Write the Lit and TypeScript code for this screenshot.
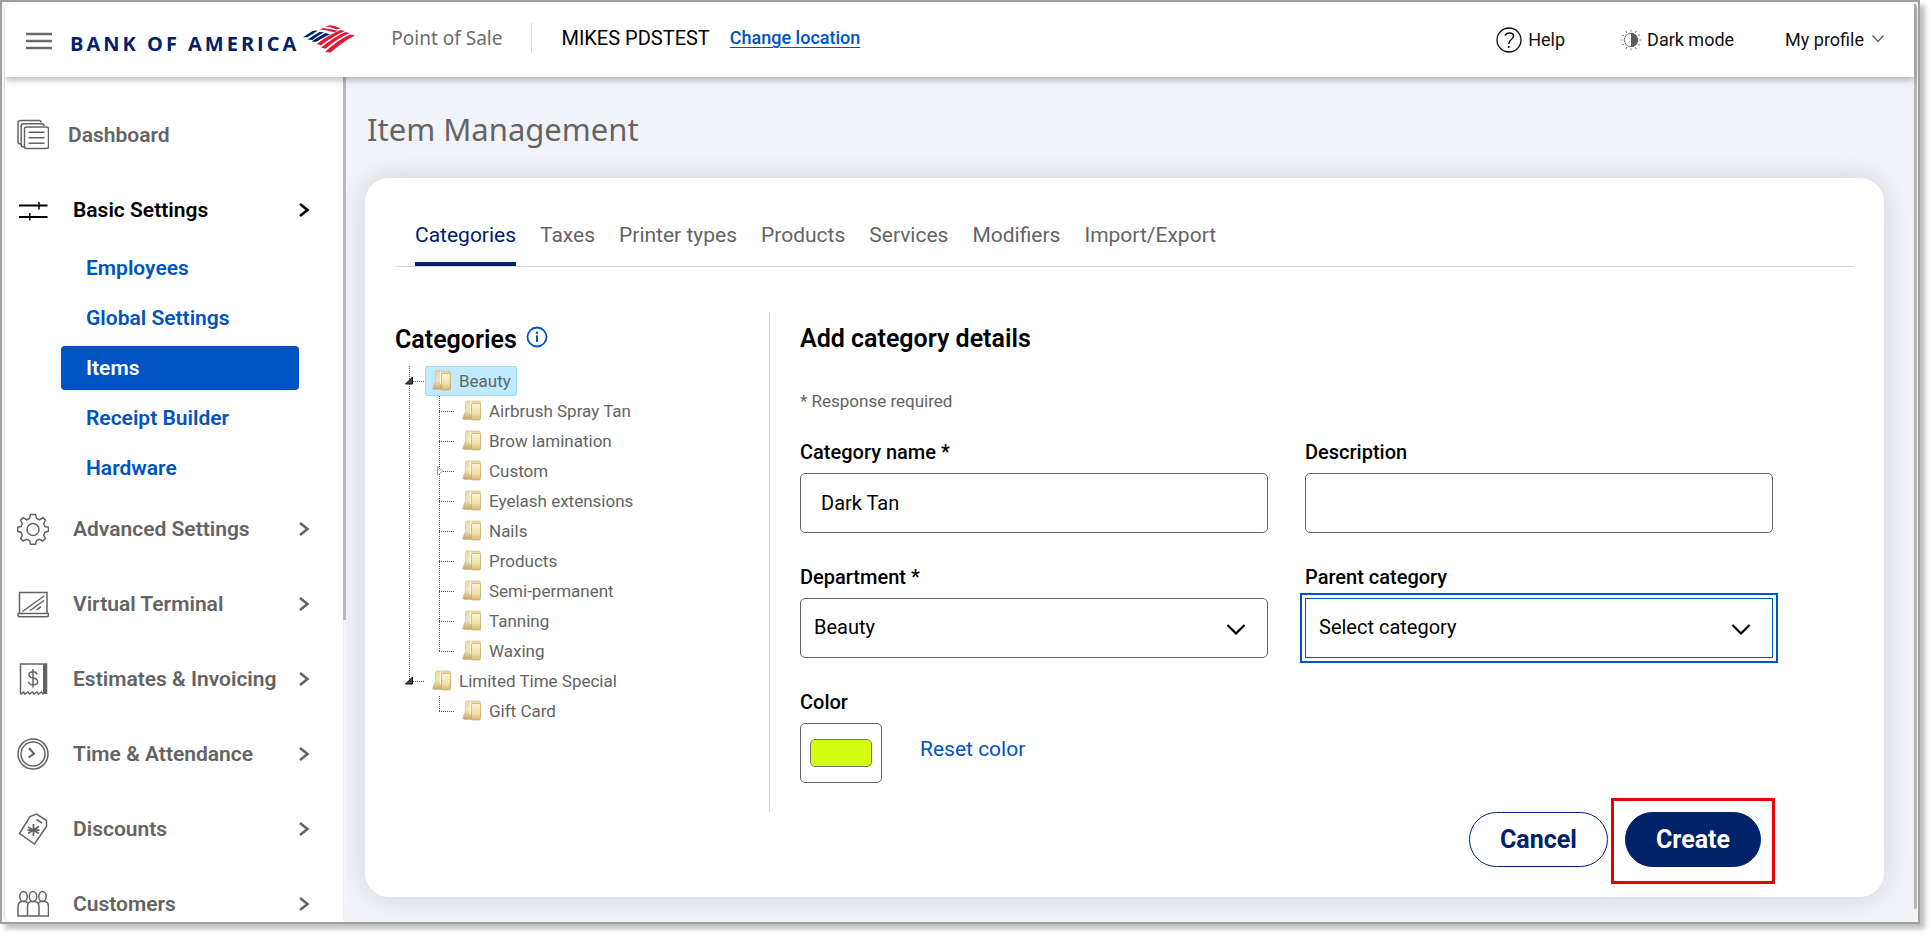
import { LitElement, html, svg, css } from "lit";
import { customElement, state } from "lit/decorators.js";
import { classMap } from "lit/directives/class-map.js";

interface TreeNode {
  name: string;
  selected?: boolean;
  toggle?: "open" | "closed";
  children?: TreeNode[];
}

const TREE: TreeNode[] = [
  {
    name: "Beauty",
    selected: true,
    toggle: "open",
    children: [
      { name: "Airbrush Spray Tan" },
      { name: "Brow lamination" },
      { name: "Custom", toggle: "closed" },
      { name: "Eyelash extensions" },
      { name: "Nails" },
      { name: "Products" },
      { name: "Semi-permanent" },
      { name: "Tanning" },
      { name: "Waxing" },
    ],
  },
  { name: "Limited Time Special", toggle: "open", children: [{ name: "Gift Card" }] },
];

const ICONS = {
  dashboard: svg`<path d="M5 25H3.500Q1 25 1 22.500V3.500Q1 1.500 3.500 1.500H22Q24 1.500 24 3.500M24 4.500"/><path d="M8 28H6.500Q4.200 28 4.200 25.500V7Q4.200 4.700 6.500 4.700H25Q27 4.700 27 7"/><rect x="7.500" y="8" width="24" height="21.500" rx="2"/><path d="M11.500 13.200H27.500M11.500 18.700H27.500M11.500 24.200H27.500"/>`,
  basic: svg`<path d="M2 11.500H30.500M2 23H30.500" stroke-width="2"/><path d="M22 8V15.500M12.800 19V26.500" stroke-width="1.500"/>`,
  advanced: svg`<path d="M13.500 1.500H18.500L19.500 5.500L22.500 6.800L26 4.500L28.500 7.200L26.700 10.500L28 13.500L31.500 14.200V18.300L28 19.200L26.700 22.300L28.500 25.500L25.700 28L22.500 26.300L19.500 27.500L18.500 31.200H13.500L12.500 27.500L9.500 26.300L6.300 28L3.500 25.500L5.300 22.300L4 19.200L.7 18.300V14.200L4 13.500L5.300 10.500L3.500 7.200L6.200 4.500L9.500 6.800L12.500 5.500Z"/><circle cx="16" cy="16.500" r="6"/>`,
  terminal: svg`<path d="M2.500 25V4.500H30V25"/><path d="M1 25.500H31.500V27Q31.500 28.800 29.500 28.800H3Q1 28.800 1 27Z"/><path d="M5.500 23.500L27 8M13 22.500L27 12.500M19.500 22L24 18.700"/>`,
  invoice: svg`<path d="M3.500 31V1H29.500V31"/><path d="M27.500 1V31" stroke-width="3"/><path d="M3.500 31.500L6.500 29L8 31L11 29L12.500 31L15.500 29L17 31L20 29L21.500 31L24.500 29L26 31L29 29"/><path d="M20.200 11.500Q19.500 8.700 16 8.700Q12 8.700 12 11.700Q12 14.200 16.200 15Q20.700 15.800 20.700 18.800Q20.700 21.800 16.200 21.800Q12.200 21.800 11.500 18.600M16 6V24.500"/>`,
  time: svg`<circle cx="16" cy="16" r="15"/><circle cx="16" cy="16" r="12"/><path d="M12 10L17 15.800L11.500 19.500" stroke-width="2"/>`,
  discounts: svg`<path d="M2.500 20.500L13 3.500L19.500 1L29.500 7.500V13.500L17.500 31Z"/><path d="M19.500 6.500L25 10"/><path d="M16.500 11V23M11 14L22 20.500M22 13.500L11 20.500M10.500 17.200H22.500" stroke-width="1.800"/>`,
  customers: svg`<ellipse cx="6.500" cy="8.500" rx="3.700" ry="5"/><ellipse cx="16" cy="8.500" rx="3.700" ry="5"/><ellipse cx="25.500" cy="8.500" rx="3.700" ry="5"/><path d="M10.500 28H1V19Q1 13.500 5 13.500H8Q9.500 13.500 10.500 15M22 28H10.500V19Q10.500 13.500 14.500 13.500H17.500Q22 13.500 22 19ZM22 28H31.500V19Q31.500 13.500 27.500 13.500H24.500Q22.500 13.500 21.800 15"/>`,
};

const NAV: { id: keyof typeof ICONS; label: string; sub?: string[] }[] = [
  { id: "dashboard", label: "Dashboard" },
  {
    id: "basic",
    label: "Basic Settings",
    sub: ["Employees", "Global Settings", "Items", "Receipt Builder", "Hardware"],
  },
  { id: "advanced", label: "Advanced Settings" },
  { id: "terminal", label: "Virtual Terminal" },
  { id: "invoice", label: "Estimates & Invoicing" },
  { id: "time", label: "Time & Attendance" },
  { id: "discounts", label: "Discounts" },
  { id: "customers", label: "Customers" },
];

@customElement("pos-header")
export class PosHeader extends LitElement {
  static styles = css`
    :host { display: block; position: relative; z-index: 2; }
    .bar {
      display: flex; align-items: center; height: 75px; box-sizing: border-box;
      padding: 0 30px 3px 21px; background: #fff; white-space: nowrap;
      font: 18px/24px Roboto, sans-serif; color: #111;
      box-shadow: 0 3px 7px rgba(0, 0, 0, 0.28);
    }
    button { font: inherit; color: inherit; background: none; border: 0; padding: 0; display: flex; align-items: center; cursor: pointer; }
    svg { display: block; flex: none; fill: none; }
    .menu { padding-top: 6px; }
    .logo { display: flex; align-items: center; margin-left: 18px; padding-top: 2px; gap: 4px; text-decoration: none; }
    .word { font: 700 20px/24px "Open Sans", sans-serif; letter-spacing: 3px; color: #012169; padding-top: 10px; }
    .product { font: 19px/24px "Noto Sans", sans-serif; color: #6d6d6d; margin-left: 36px; }
    .rule { width: 1px; height: 30px; background: #d8d8d8; margin: 0 29px; }
    .place { font-size: 20px; color: #000; }
    .change { font-weight: 500; color: #0053c2; margin-left: 20px; text-decoration: underline; text-underline-offset: 3px; }
    .right { margin-left: auto; display: flex; align-items: center; padding-top: 3px; }
    .help { gap: 6px; }
    .dark { gap: 5px; margin-left: 55px; }
    .profile { gap: 8px; margin-left: 51px; }
  `;

  render() {
    const rays = [0, 30, 60, 90, 120, 150, 180, 210, 240, 270, 300, 330];
    return html`
      <header class="bar">
        <button class="menu" aria-label="Menu">
          <svg width="26" height="20" viewBox="0 0 26 20" stroke="#6a6a6a" stroke-width="2.400"><path d="M0 3H26M0 10H26M0 17H26" /></svg>
        </button>
        <a class="logo" href="#" aria-label="Home">
          <span class="word">BANK OF AMERICA</span>
          <svg width="52" height="28" viewBox="0 0 52 28">
            <g fill="#012169">
              <path d="M0 12.200L10 5.800L15 5.500L4.500 12.200Z" /><path d="M4.500 14.500Q12 9.500 16.500 7L21 7.200Q15 10.500 9.500 15Z" /><path d="M8.500 16.500Q16 11.500 22.500 8L27 9.200Q20 12.500 13.500 16.800Z" />
            </g>
            <g fill="#e31837">
              <path d="M16 4.200L20.500 3Q28 4 35 5.800L31 7.300Q24 5 16 4.200Z" /><path d="M22.500 1.500L27 .3Q32 1 37.500 3.200L33.500 4.600Q28 2.200 22.500 1.500Z" />
              <path d="M13.500 19Q27 9 37.500 4.900L42 6Q31 10.500 18 20.300Z" /><path d="M18.200 22.400Q31 12 42.500 7L46.500 8.300Q35 13 22.500 23.800Z" /><path d="M22 27Q34 15.500 47 9.500L52 10.600Q41 16 27.500 27.500Z" />
            </g>
          </svg>
        </a>
        <span class="product">Point of Sale</span>
        <span class="rule"></span>
        <span class="place">MIKES PDSTEST</span>
        <a class="change" href="#">Change location</a>
        <div class="right">
          <button class="help">
            <svg width="26" height="26" viewBox="0 0 26 26" stroke="#111"><circle cx="13" cy="13" r="12" stroke-width="1.300" /><path d="M9 8.500Q10 6 13.500 6Q17.500 6 17.500 9Q17.500 11 15.300 12.500Q13 14 12.800 17" stroke-width="1.500" /><circle cx="12.700" cy="20" r="1" fill="#111" stroke="none" /></svg>
            Help
          </button>
          <button class="dark">
            <svg width="22" height="22" viewBox="0 0 22 22" stroke="#777">
              <circle cx="11" cy="11" r="6.700" stroke-width="1" /><path d="M11 4A7 7 0 0 1 11 18Z" fill="#5c5c5c" stroke="none" />
              ${rays.map((a) => svg`<path d="M11 .700V2.600" transform="rotate(${a} 11 11)" />`)}
            </svg>
            Dark mode
          </button>
          <button class="profile">
            My profile
            <svg width="12" height="12" viewBox="0 0 12 12" stroke="#666" stroke-width="1.500"><path d="M.5 1.500L6 7.500L11.500 1.500" /></svg>
          </button>
        </div>
      </header>
    `;
  }
}

@customElement("pos-sidebar")
export class PosSidebar extends LitElement {
  static styles = css`
    :host { display: flex; background: #fff; overflow: hidden; }
    nav { width: 338px; box-sizing: border-box; padding-top: 20px; font: 600 21px/24px Roboto, sans-serif; }
    ul { list-style: none; margin: 0; padding: 0; }
    a { text-decoration: none; color: inherit; }
    .item { display: flex; align-items: center; height: 75px; padding: 0 33px 0 12px; color: #646464; }
    .item svg { flex: none; fill: none; stroke: currentColor; stroke-width: 1.5; display: block; }
    .label { flex: 1; margin-left: 24px; white-space: nowrap; }
    .plain .label { margin-left: 19px; }
    .current { color: #000; }
    .sub { margin: -1px 44px 1px 56px; }
    .sub a { display: block; padding: 10px 25px; margin-bottom: 6px; border-radius: 4px; color: #0053c2; }
    .sub li:last-child a { margin: 0; }
    .sub .active { background: #0053c2; color: #fff; }
    .track { width: 3px; background: #f4f4f4; }
    .thumb { height: 543px; max-height: 65%; background: #b8b8b8; }
  `;

  render() {
    return html`
      <nav>
        <ul>
          ${NAV.map(
            (n) => html`<li>
              <a href="#" class=${classMap({ item: true, plain: n.id === "dashboard", current: !!n.sub })}>
                <svg width="32" height="32" viewBox="0 0 32 32">${ICONS[n.id]}</svg>
                <span class="label">${n.label}</span>
                ${n.id === "dashboard"
                  ? null
                  : html`<svg width="11" height="14" viewBox="0 0 11 14"><path d="M1 1L8.500 7L1 13" stroke-width="2.600" /></svg>`}
              </a>
              ${n.sub
                ? html`<ul class="sub">
                    ${n.sub.map((s) => html`<li><a href="#" class=${classMap({ active: s === "Items" })}>${s}</a></li>`)}
                  </ul>`
                : null}
            </li>`
          )}
        </ul>
      </nav>
      <div class="track"><div class="thumb"></div></div>
    `;
  }
}

@customElement("category-tree")
export class CategoryTree extends LitElement {
  static styles = css`
    :host { display: block; font: 17px/20px Roboto, sans-serif; color: #646464; }
    ul { list-style: none; margin: 0; padding: 0; }
    ul ul { margin-left: 30px; }
    li {
      background-image: repeating-linear-gradient(to bottom, #555 0 1px, transparent 1px 2px), repeating-linear-gradient(to right, #555 0 1px, transparent 1px 2px);
      background-repeat: no-repeat;
      background-size: 1px 100%, 16px 1px;
      background-position: 4px 0, 4px 15px;
    }
    li:last-child { background-size: 1px 16px, 16px 1px; }
    .row { display: flex; align-items: center; height: 30px; }
    .slot { width: 20px; height: 10px; padding: 0; border: 0; background: none; display: block; }
    .slot svg { display: block; }
    .node {
      display: flex; align-items: center; gap: 8px; height: 30px; box-sizing: border-box; padding: 0 5px 1px 6px;
      border: 1px solid transparent; border-radius: 2px; color: inherit; text-decoration: none; white-space: nowrap;
    }
    .selected { background: #beebff; border-color: #99defd; }
  `;

  private folder() {
    return html`<svg width="19" height="21" viewBox="0 0 19 21">
      <defs>
        <linearGradient id="back" x1="0" y1="0" x2="0" y2="1"><stop offset="0" stop-color="#e9d9a6" /><stop offset=".5" stop-color="#f3e6b8" /><stop offset="1" stop-color="#c4a566" /></linearGradient>
        <linearGradient id="front" x1="0" y1="0" x2="0" y2="1"><stop offset="0" stop-color="#fdf6d6" /><stop offset=".6" stop-color="#f0dfa6" /><stop offset="1" stop-color="#d5b673" /></linearGradient>
      </defs>
      <path d="M0 19L3 12V19.500Z" fill="#bdbdbd" />
      <path d="M3.500 2.500Q3.500 1 5 1H16.500Q18.500 1 18.500 3V17H10V19.500H2.500Q1.500 19.500 1.500 18.500V16Q3.500 14 3.500 11Z" fill="url(#back)" stroke="#cdb98a" stroke-width=".6" />
      <path d="M8.500 1.500V13L10 15" fill="none" stroke="#fffbe6" stroke-width="1.200" />
      <path d="M10.500 3.500H17.500Q18.500 3.500 18.500 4.500V18.500Q18.500 20 17 20H11Q9.500 20 9.500 18.500V4.500Q9.500 3.500 10.500 3.500Z" fill="url(#front)" stroke="#c3a768" stroke-width=".7" />
    </svg>`;
  }

  private toggle(kind?: string) {
    if (!kind) return html`<span class="slot"></span>`;
    return html`<button class="slot" aria-label="Toggle">
      <svg width="10" height="10" viewBox="0 0 10 10">
        ${kind === "open" ? svg`<path d="M7.500 1V8H.5Z" fill="#444" stroke="#111" />` : svg`<path d="M2.500 .5V9.500L7.500 5Z" fill="#fff" stroke="#aaa" />`}
      </svg>
    </button>`;
  }

  private list(nodes: TreeNode[]): unknown {
    return html`<ul>
      ${nodes.map(
        (n) => html`<li>
          <div class="row">
            ${this.toggle(n.toggle)}
            <a href="#" class=${classMap({ node: true, selected: !!n.selected })}>${this.folder()}<span>${n.name}</span></a>
          </div>
          ${n.children ? this.list(n.children) : null}
        </li>`
      )}
    </ul>`;
  }

  render() {
    return this.list(TREE);
  }
}

@customElement("category-form")
export class CategoryForm extends LitElement {
  @state() private color = "#d4ff10";

  static styles = css`
    :host { display: block; font: 20px/24px Roboto, sans-serif; color: #000; }
    h2 { font-size: 25px; line-height: 30px; font-weight: 600; margin: 0; }
    .note { font-size: 17px; color: #646464; margin: 35px 0 27px; }
    .grid { display: grid; grid-template-columns: 1fr 1fr; gap: 32px 37px; }
    .field { display: flex; flex-direction: column; gap: 9px; min-width: 0; }
    label { font-weight: 500; }
    input, select {
      font: inherit; color: inherit; height: 60px; box-sizing: border-box; width: 100%; margin: 0;
      border: 1px solid #646464; border-radius: 5px; background: #fff; padding: 0 20px; appearance: none;
    }
    .pick { display: grid; align-items: center; }
    .pick > * { grid-area: 1 / 1; }
    .pick svg { justify-self: end; margin: 2px 22px 0 0; pointer-events: none; fill: none; stroke: #000; stroke-width: 2.2; }
    select { padding: 0 48px 2px 13px; }
    .focused { border-color: #0053c2; border-radius: 0; outline: 2px solid #0053c2; outline-offset: 3px; }
    .swatches { display: flex; gap: 38px; }
    .color { width: 82px; padding: 15px 9px; }
    .color::-webkit-color-swatch-wrapper { padding: 0; }
    .color::-webkit-color-swatch { border: 1px solid #777; border-radius: 5px; }
    .reset { font-size: 21px; line-height: 52px; color: #0053c2; text-decoration: none; }
  `;

  private chevron() {
    return html`<svg width="20" height="12" viewBox="0 0 20 12"><path d="M1.500 2L10 10.500L18.500 2" /></svg>`;
  }

  render() {
    return html`
      <h2>Add category details</h2>
      <p class="note">* Response required</p>
      <div class="grid">
        <div class="field">
          <label for="name">Category name *</label>
          <input id="name" type="text" value="Dark Tan" />
        </div>
        <div class="field">
          <label for="description">Description</label>
          <input id="description" type="text" />
        </div>
        <div class="field">
          <label for="department">Department *</label>
          <div class="pick"><select id="department"><option>Beauty</option><option>Limited Time Special</option></select>${this.chevron()}</div>
        </div>
        <div class="field">
          <label for="parent">Parent category</label>
          <div class="pick"><select id="parent" class="focused"><option>Select category</option></select>${this.chevron()}</div>
        </div>
        <div class="field">
          <label for="color">Color</label>
          <div class="swatches">
            <input id="color" class="color" type="color" .value=${this.color} @input=${(e: Event) => (this.color = (e.target as HTMLInputElement).value)} />
            <a class="reset" href="#">Reset color</a>
          </div>
        </div>
      </div>
    `;
  }
}

@customElement("app-root")
export class AppRoot extends LitElement {
  @state() private tab = "Categories";

  static styles = css`
    :host { display: block; height: 100vh; box-sizing: border-box; padding: 0 12px 12px 0; background: #fff; font: 20px/24px Roboto, sans-serif; overflow: hidden; }
    .frame { height: 100%; box-sizing: border-box; border: 2px solid #a0a0a0; padding-left: 2px; background: #f7f7f7; box-shadow: 5px 5px 5px rgba(0, 0, 0, 0.25); }
    .window { height: 100%; box-sizing: border-box; display: flex; border-left: 1px solid #dcdcdc; border-radius: 8px; overflow: hidden; background: #f2f3f8; }
    .app { flex: 1; min-width: 0; display: flex; flex-direction: column; }
    .gutter { width: 4px; flex: none; box-sizing: border-box; padding: 2px 1px 13px 0; background: #f4f4f4; }
    .gutter-thumb { height: 100%; background: #b8b8b8; border-radius: 0 2px 2px 0; }
    .body { flex: 1; min-height: 0; display: flex; }
    main { flex: 1; min-width: 0; padding: 32px 30px 0 19px; overflow: hidden; }
    h1 { font: 31px/40px "Noto Sans", sans-serif; color: #646464; margin: 0 0 29px 2px; }
    .card { background: #fff; border-radius: 24px; box-shadow: 0 0 30px rgba(0, 0, 0, 0.13); padding: 30px 30px 27px; }
    .tabs { display: flex; gap: 24px; padding-left: 20px; border-bottom: 1px solid #d8d8d8; }
    .tab { font: 21px/24px Roboto, sans-serif; color: #646464; background: none; border: 0; border-bottom: 4px solid transparent; padding: 15px 0; cursor: pointer; white-space: nowrap; }
    .tab.active { color: #012169; border-color: #012169; }
    .columns { display: flex; margin-top: 45px; min-height: 500px; }
    .left { width: 374px; flex: none; border-right: 1px solid #d8d8d8; padding: 13px 0 0; }
    .left category-tree { margin: 11px 0 0 10px; }
    .head { display: flex; gap: 9px; }
    h2 { font-size: 25px; line-height: 30px; font-weight: 600; margin: 0; color: #000; }
    .info { padding: 0; border: 0; background: none; height: 24px; }
    .info svg { display: block; }
    category-form { flex: 1; min-width: 0; padding: 12px 81px 0 30px; }
    .actions { display: flex; justify-content: flex-end; align-items: flex-start; gap: 17px; padding-right: 93px; }
    .pill { font: 700 25px/30px Roboto, sans-serif; height: 55px; border-radius: 28px; border: 1px solid #012169; padding: 0 30px; background: #fff; color: #012169; cursor: pointer; display: block; }
    .primary { background: #012169; color: #fff; }
    .callout { padding-bottom: 3px; outline: 3px solid #e90000; outline-offset: 11px; }
  `;

  render() {
    const tabs = ["Categories", "Taxes", "Printer types", "Products", "Services", "Modifiers", "Import/Export"];
    return html`
      <div class="frame">
        <div class="window">
          <div class="app">
            <pos-header></pos-header>
            <div class="body">
              <pos-sidebar></pos-sidebar>
              <main>
                <h1>Item Management</h1>
                <section class="card">
                  <div class="tabs" role="tablist">
                    ${tabs.map(
                      (t) => html`<button role="tab" class=${classMap({ tab: true, active: t === this.tab })} @click=${() => (this.tab = t)}>${t}</button>`
                    )}
                  </div>
                  <div class="columns">
                    <div class="left">
                      <div class="head">
                        <h2>Categories</h2>
                        <button class="info" aria-label="About categories">
                          <svg width="22" height="22" viewBox="0 0 22 22"><circle cx="11" cy="11" r="9.500" fill="none" stroke="#0053c2" stroke-width="1.800" /><path d="M11 9.500V16" stroke="#0053c2" stroke-width="2" /><circle cx="11" cy="6.800" r="1.200" fill="#0053c2" /></svg>
                        </button>
                      </div>
                      <category-tree></category-tree>
                    </div>
                    <category-form></category-form>
                  </div>
                  <div class="actions">
                    <button class="pill">Cancel</button>
                    <span class="callout"><button class="pill primary">Create</button></span>
                  </div>
                </section>
              </main>
            </div>
          </div>
          <div class="gutter"><div class="gutter-thumb"></div></div>
        </div>
      </div>
    `;
  }
}
